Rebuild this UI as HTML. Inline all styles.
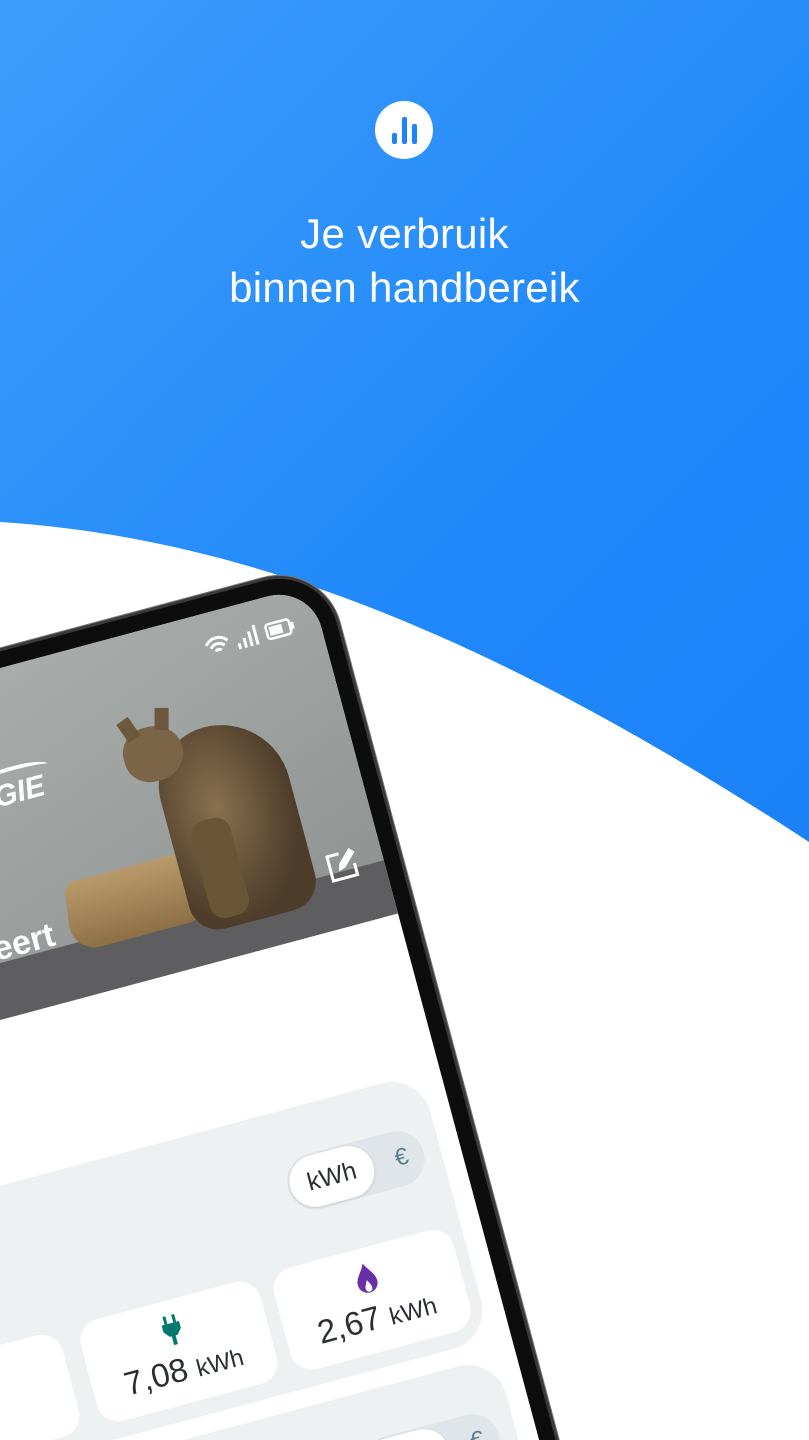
<!DOCTYPE html>
<html><head><meta charset="utf-8"><style>
*{margin:0;padding:0;box-sizing:border-box}
html,body{width:809px;height:1440px;overflow:hidden}
body{position:relative;font-family:"Liberation Sans",sans-serif;background:linear-gradient(135deg,#3d9dfb 0%,#2088fa 45%,#167cf7 100%)}
.bgw{position:absolute;left:0;top:0}
.clip{position:absolute;left:0;top:0;width:809px;height:1440px;overflow:hidden}
.title{position:absolute;left:0;width:809px;text-align:center;color:#fff;font-size:42px;line-height:54px;top:207px;letter-spacing:0.3px}
.ico{position:absolute;left:375px;top:101px;width:58px;height:58px;border-radius:50%;background:#fff}
.ico i{position:absolute;background:#1e85f9;border-radius:2px;width:5px}
.wrap{position:absolute;left:310px;top:585px;width:0;height:0;transform:rotate(-15deg);transform-origin:0 0}
.frame{position:absolute;left:-620px;top:-16px;width:636px;height:930px;background:#0d0d0d;border-top-right-radius:60px;box-shadow:0 0 0 3px #3a3a3a,0 0 0 4px #777}
.screen{position:absolute;left:-600px;top:0;width:600px;height:920px;background:#fff;border-top-right-radius:44px;overflow:hidden}
.hdr{position:absolute;left:0;top:0;width:600px;height:340px;background:linear-gradient(160deg,#aeb2b0 0%,#9ea3a2 50%,#8c9190 100%);overflow:hidden}
.carpet{position:absolute;left:0;top:285px;width:600px;height:60px;background:#5e5e61}
.gray{position:absolute;right:20px;width:700px;background:#eef1f2;border-radius:40px}
.pill{position:absolute;right:17px;top:49px;width:140px;height:56px;border-radius:28px;background:#e0e5e9}
.knob{position:absolute;left:2px;top:2px;width:86px;height:52px;border-radius:26px;background:#fff;box-shadow:0 1px 3px rgba(0,0,0,.12);font-size:25px;color:#2b2f33;text-align:center;line-height:52px}
.eur{position:absolute;right:16px;top:0;line-height:56px;font-size:24px;color:#5b7f8e}
.card{position:absolute;top:154px;height:105px;width:186px;background:#fff;border-radius:22px;text-align:center;color:#2b2f33}
.val{position:absolute;left:0;width:100%;top:52px;font-size:33px}
.val small{font-size:24px}
</style></head><body>
<div class="clip">
<svg class="bgw" width="809" height="1440"><path d="M0,522 C250,538 500,640 809,842 L809,1440 L0,1440Z" fill="#fff"/></svg>
<div class="ico"><i style="left:17px;top:32px;height:11px"></i><i style="left:27px;top:16px;height:27px"></i><i style="left:37px;top:23px;height:20px"></i></div>
<div class="title">Je verbruik<br>binnen handbereik</div>

<div class="wrap">
 <div class="frame"></div>
 <div class="screen">
  <div class="hdr">
   <div class="carpet"></div>
   <div style="position:absolute;left:280px;top:225px;width:150px;height:70px;background:linear-gradient(#b89a6a,#8d7045);border-radius:10px 10px 30px 30px;transform:skewX(-8deg)"></div>
   <div style="position:absolute;left:400px;top:110px;width:130px;height:200px;background:radial-gradient(ellipse at 40% 40%,#8a7050,#4e3d2a 70%);border-radius:60px 70px 30px 30px"></div>
   <div style="position:absolute;left:375px;top:95px;width:60px;height:55px;background:#7b6448;border-radius:45% 50% 50% 45%"></div>
   <div style="position:absolute;left:380px;top:82px;width:14px;height:22px;background:#6d583e;transform:rotate(-20deg)"></div>
   <div style="position:absolute;left:415px;top:80px;width:14px;height:22px;background:#6d583e;transform:rotate(15deg)"></div>
   <div style="position:absolute;left:420px;top:200px;width:40px;height:100px;background:#6b5538;border-radius:15px"></div>
   <div style="position:absolute;left:240px;top:108px;color:#fff;font-size:30px;font-weight:bold;font-style:italic">GIE</div>
   <div style="position:absolute;left:230px;top:98px;width:70px;height:14px;border-top:4px solid #fff;border-radius:50%"></div>
   <div style="position:absolute;left:200px;top:252px;color:#fff;font-size:34px;font-weight:bold">eert</div>
   <svg style="position:absolute;left:542px;top:262px" width="34" height="34" viewBox="0 0 34 34"><path d="M16 5H4v25h25V18" fill="none" stroke="#fff" stroke-width="3"/><path d="M12 22l2-7 13-13 5 5-13 13z" fill="#fff"/></svg>
   <svg style="position:absolute;left:482px;top:22px" width="100" height="26" viewBox="0 0 100 26"><path d="M2 10a14 14 0 0 1 22 0M6 14a9 9 0 0 1 14 0M10 18a4 4 0 0 1 6 0" fill="none" stroke="#fff" stroke-width="3"/><rect x="33" y="16" width="3" height="6" fill="#fff"/><rect x="39" y="12" width="3" height="10" fill="#fff"/><rect x="45" y="7" width="3" height="15" fill="#fff"/><rect x="51" y="2" width="3" height="20" fill="#fff"/><rect x="64" y="5" width="24" height="15" rx="3" fill="none" stroke="#fff" stroke-width="2.5"/><rect x="67" y="8" width="13" height="9" fill="#fff"/><rect x="89" y="9" width="3" height="7" fill="#fff"/></svg>
  </div>

  <div class="gray" style="top:500px;height:275px">
   <div class="pill"><div class="knob">kWh</div><div class="eur">€</div></div>
   <div class="card" style="right:12px">
    <svg style="position:absolute;left:81px;top:14px" width="24" height="32" viewBox="0 0 24 32"><path d="M12 1C10 8 2 13 2 21a10 10 0 0 0 20 0C22 14 16 9 12 1zM12 30c-3 0-4-3-3-6l3-6 3 6c1 3 0 6-3 6z" fill="#6a2ea6" fill-rule="evenodd"/></svg>
    <div class="val">2,67 <small>kWh</small></div></div>
   <div class="card" style="right:212px">
    <svg style="position:absolute;left:81px;top:14px" width="22" height="32" viewBox="0 0 22 32"><rect x="5" y="1" width="3" height="8" fill="#00786b"/><rect x="14" y="1" width="3" height="8" fill="#00786b"/><path d="M2 9h18v7l-5 6H7l-5-6z" fill="#00786b"/><rect x="9" y="21" width="4" height="10" fill="#00786b"/></svg>
    <div class="val">7,08 <small>kWh</small></div></div>
   <div class="card" style="right:417px"></div>
  </div>
  <div class="gray" style="top:793px;height:275px">
   <div class="pill"><div class="knob">kWh</div><div class="eur">€</div></div>
  </div>
 </div>
</div>
</div>
</body></html>
